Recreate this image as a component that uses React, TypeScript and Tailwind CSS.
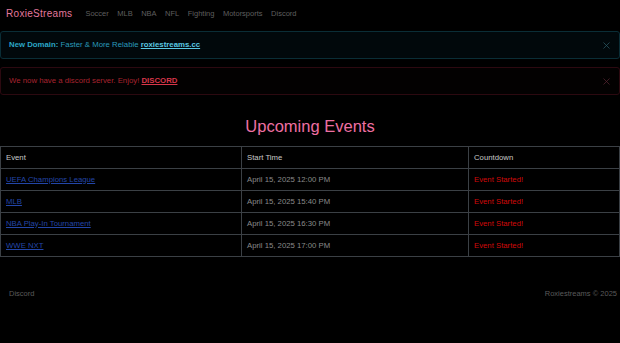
import { X } from "lucide-react";

const links = ["Soccer", "MLB", "NBA", "NFL", "Fighting", "Motorsports", "Discord"];

const events = [
  { name: "UEFA Champions League", time: "April 15, 2025 12:00 PM" },
  { name: "MLB", time: "April 15, 2025 15:40 PM" },
  { name: "NBA Play-In Tournament", time: "April 15, 2025 16:30 PM" },
  { name: "WWE NXT", time: "April 15, 2025 17:00 PM" },
];

const App = () => {
  return (
    <div className="min-h-screen bg-black font-['Liberation_Sans',Arial,sans-serif]">
      {/* Navbar */}
      <nav className="flex h-[27px] items-center px-[6px]">
        <span className="text-[10px] tracking-[0.3px] text-[#e3789d]">RoxieStreams</span>
        <div className="ml-[13px] flex gap-[8.5px]">
          {links.map((l) => (
            <a key={l} href="#" className="text-[7.5px] text-[#5f5f5f]">
              {l}
            </a>
          ))}
        </div>
      </nav>

      {/* Alerts */}
      <div className="mt-[4px] flex flex-col gap-[8px]">
        <div className="flex h-[28px] items-center justify-between rounded-[3px] border border-[#0a2d36] bg-[#01080b] pl-[8px] pr-[7px]">
          <p className="text-[7.8px] text-[#2a9bbb]">
            <span className="font-bold text-[#2ba6c6]">New Domain:</span> Faster &amp; More Relable{" "}
            <a href="#" className="font-bold text-[#5ac7e2] underline">
              roxiestreams.cc
            </a>
          </p>
          <X size={11} strokeWidth={1.5} className="text-[#2f5f6b]" />
        </div>
        <div className="flex h-[28px] items-center justify-between rounded-[3px] border border-[#2c0910] bg-[#030101] pl-[8px] pr-[7px]">
          <p className="text-[7.8px] text-[#a8232f]">
            We now have a discord server. Enjoy!{" "}
            <a href="#" className="font-bold text-[#d8364a] underline">
              DISCORD
            </a>
          </p>
          <X size={11} strokeWidth={1.5} className="text-[#5c2834]" />
        </div>
      </div>

      {/* Upcoming events */}
      <h2 className="mt-[21px] mb-[10px] text-center text-[16.5px] leading-[20px] text-[#ee6fa2]">
        Upcoming Events
      </h2>

      <table className="w-full border-collapse text-left text-[7.75px]">
        <thead>
          <tr className="h-[22px]">
            <th className="w-[241px] border border-[#3b4045] px-[5px] font-normal text-[#c9c9c9]">Event</th>
            <th className="w-[227px] border border-[#3b4045] px-[5px] font-normal text-[#c9c9c9]">Start Time</th>
            <th className="border border-[#3b4045] px-[5px] font-normal text-[#c9c9c9]">Countdown</th>
          </tr>
        </thead>
        <tbody>
          {events.map((e) => (
            <tr key={e.name} className="h-[22px]">
              <td className="border border-[#3b4045] px-[5px]">
                <a href="#" className="text-[#2346a8] underline">
                  {e.name}
                </a>
              </td>
              <td className="border border-[#3b4045] px-[5px] text-[#8a8a8a]">{e.time}</td>
              <td className="border border-[#3b4045] px-[5px] text-[#d10a0a]">Event Started!</td>
            </tr>
          ))}
        </tbody>
      </table>

      {/* Footer */}
      <footer className="mt-[31px] flex items-center justify-between pl-[9px] pr-[3px] text-[7.5px] text-[#5a5a5a]">
        <a href="#">Discord</a>
        <span>Roxiestreams © 2025</span>
      </footer>
    </div>
  );
};

export default App;
